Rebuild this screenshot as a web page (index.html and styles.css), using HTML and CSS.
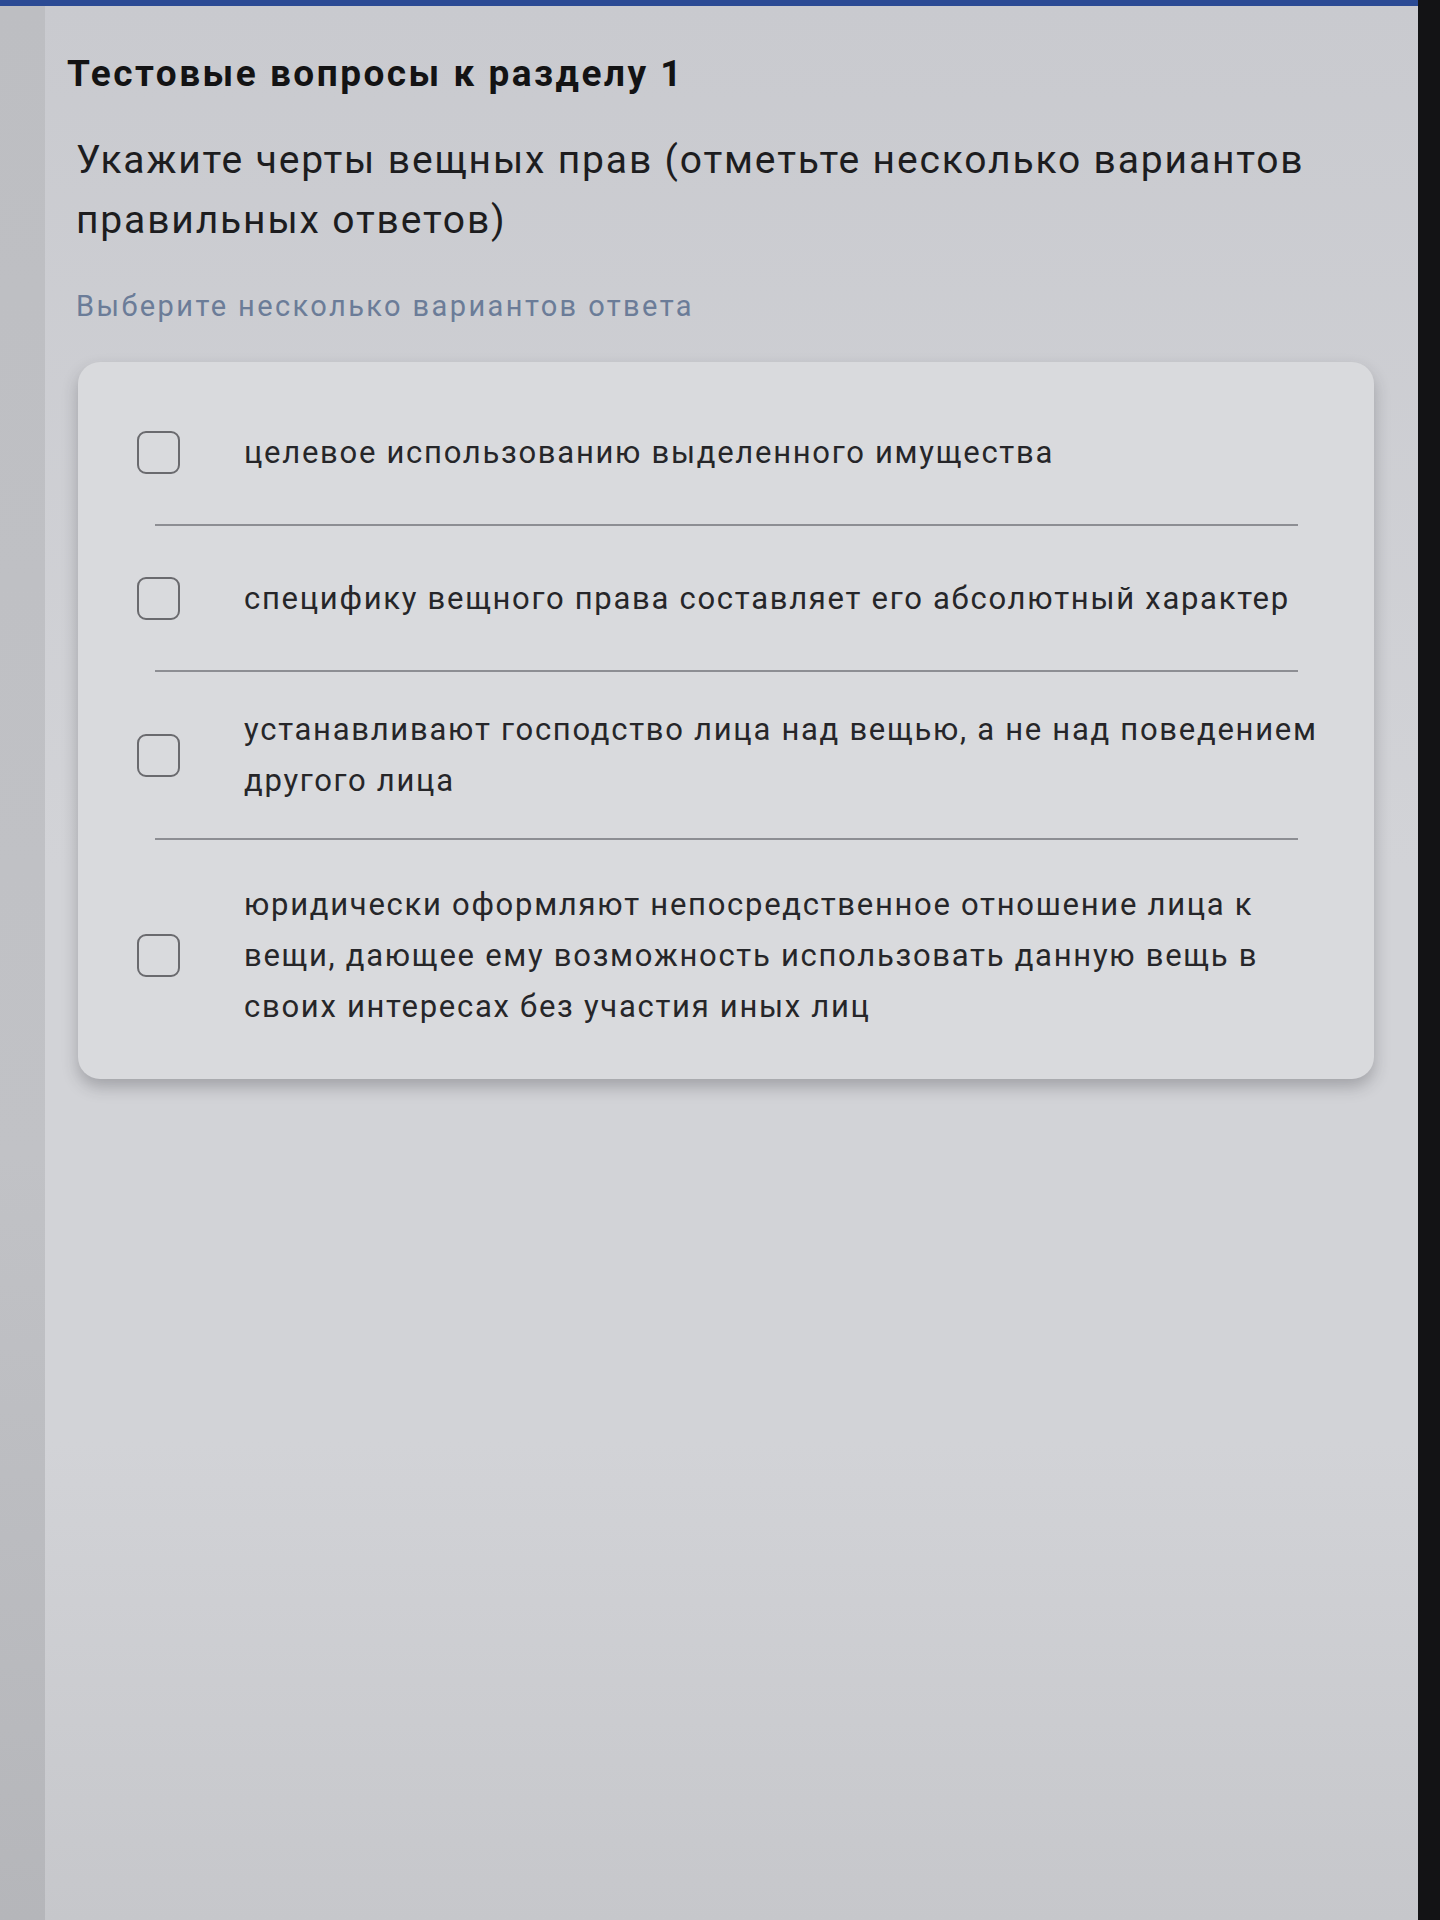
FILE: index.html
```html
<!DOCTYPE html>
<html lang="ru">
<head>
  <meta charset="UTF-8" />
  <meta name="viewport" content="width=device-width, initial-scale=1.0" />
  <title>Тестовые вопросы к разделу 1</title>
  <link rel="stylesheet" href="styles.css">
</head>
<body>
  <div class="screen">
    <div class="edge"></div>

    <main class="page">
      <h1 class="section-title">Тестовые вопросы к разделу 1</h1>

      <!-- вопрос -->
      <h2 class="question">Укажите черты вещных прав (отметьте несколько вариантов правильных ответов)</h2>
      <p class="hint">Выберите несколько вариантов ответа</p>

      <div class="answers">
        <label class="option">
          <span class="check"><span class="box"></span></span>
          <span class="text">целевое использованию выделенного имущества</span>
        </label>
        <div class="divider"></div>

        <label class="option">
          <span class="check"><span class="box"></span></span>
          <span class="text">специфику вещного права составляет его абсолютный характер</span>
        </label>
        <div class="divider"></div>

        <label class="option">
          <span class="check"><span class="box"></span></span>
          <span class="text">устанавливают господство лица над вещью, а не над поведением другого лица</span>
        </label>
        <div class="divider"></div>

        <label class="option">
          <span class="check"><span class="box"></span></span>
          <span class="text">юридически оформляют непосредственное отношение лица к вещи, дающее ему возможность использовать данную вещь в своих интересах без участия иных лиц</span>
        </label>
      </div>
    </main>
  </div>
</body>
</html>
```

FILE: styles.css
```css
body {
  margin: 0;
  padding: 0;
  font-family: Roboto, "Noto Sans", sans-serif;
  background: #131315;
  color: #1c1c1e;
}

.screen {
  display: flex;
  min-height: 1914px;
  margin-right: 22px;
  border-top: 6px solid #2b4a94;
  background: linear-gradient(to bottom, #c9cacf 0%, #d2d3d7 45%, #d2d3d7 75%, #c6c7cb 100%);
}

.edge {
  width: 45px;
  flex-shrink: 0;
  background: linear-gradient(to bottom, #bdbec2, #c1c2c6 60%, #b5b6ba);
}

.page {
  flex: 1;
  padding: 46px 0 0 0;
}

.section-title {
  margin: 0 0 34px 22px;
  font-size: 37px;
  line-height: 44px;
  font-weight: 700;
  letter-spacing: 2.5px;
  color: #131314;
}

.question {
  margin: 0 40px 38px 31px;
  font-size: 39px;
  line-height: 60px;
  font-weight: 400;
  letter-spacing: 1.85px;
  color: #1d1d1f;
}

.hint {
  margin: 0 0 38px 31px;
  font-size: 29px;
  line-height: 36px;
  letter-spacing: 2.4px;
  color: #6b7c98;
}

.answers {
  margin: 0 44px 0 33px;
  padding: 18px 0 15px;
  background: #d9dadd;
  border-radius: 22px;
  box-shadow: 0 8px 16px rgba(40, 40, 48, 0.28);
}

.option {
  display: flex;
  align-items: center;
  gap: 64px;
  padding: 32px 24px 32px 59px;
  cursor: pointer;
}

.option:last-child {
  padding-top: 39px;
}

.check {
  display: flex;
  align-items: center;
  height: 80px;
  flex-shrink: 0;
}

.box {
  width: 39px;
  height: 39px;
  border: 2.5px solid #6a6a6e;
  border-radius: 9px;
}

.text {
  font-size: 31px;
  line-height: 51px;
  letter-spacing: 1.72px;
  color: #262629;
}

.divider {
  height: 2px;
  margin: 0 76px 0 77px;
  background: #8d8e93;
}
```
